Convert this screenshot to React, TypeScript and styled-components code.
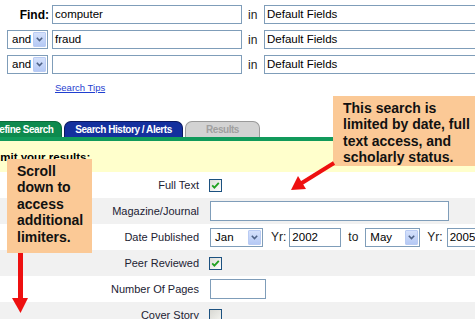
import React from "react";
import styled, { createGlobalStyle, css } from "styled-components";

const Global = createGlobalStyle`
  html, body { margin: 0; padding: 0; background: #fff; }
  body { font-family: "Liberation Sans", Arial, sans-serif; color: #000; }
`;

const Page = styled.div`
  position: relative;
  width: 475px;
  height: 319px;
  overflow: hidden;
  background: #fff;
`;

const SearchGrid = styled.div`
  display: grid;
  grid-template-columns: 52px 190px 22px 240px;
  grid-auto-rows: 19px;
  row-gap: 6px;
  align-items: center;
  padding-top: 5px;
`;

const FindLabel = styled.div`
  font-weight: bold;
  font-size: 12px;
  text-align: right;
  padding-right: 3px;
`;

const TextBox = styled.div<{ $w?: number; $h?: number }>`
  box-sizing: border-box;
  width: ${(p) => (p.$w ? `${p.$w}px` : "100%")};
  height: ${(p) => p.$h ?? 19}px;
  border: 1px solid #7f9db9;
  background: #fff;
  font-size: 11.5px;
  line-height: ${(p) => (p.$h ?? 19) - 2}px;
  padding-left: 2px;
  white-space: nowrap;
  overflow: hidden;
`;

const InWord = styled.div`
  font-size: 12px;
  padding-left: 6px;
  color: #222;
`;

const SelectBox = styled.div<{ $w: number; $ml?: number }>`
  box-sizing: border-box;
  display: flex;
  align-items: stretch;
  justify-content: space-between;
  width: ${(p) => p.$w}px;
  height: 19px;
  margin-left: ${(p) => p.$ml ?? 0}px;
  border: 1px solid #7f9db9;
  background: #fff;
  font-size: 11.5px;
  line-height: 17px;
  padding: 1px;
`;

const SelectText = styled.span`
  padding-left: 3px;
  line-height: 15px;
`;

const DropButton = styled.span`
  box-sizing: border-box;
  width: 13px;
  border: 1px solid #b9cbf3;
  border-radius: 1px;
  background: linear-gradient(#d5e1fb, #b5c9f5);
  display: flex;
  align-items: center;
  justify-content: center;
`;

const Tips = styled.a`
  display: block;
  margin: 8px 0 0 55px;
  font-size: 9.5px;
  line-height: 11px;
  color: #1f3fd0;
  text-decoration: underline;
`;

const TabBar = styled.div`
  display: flex;
  gap: 2px;
  margin: 28px 0 0 -16px;
  height: 16px;
`;

const tabColors = {
  green: css`background: #0d8a4e; color: #fff; border-color: #0a6a3c;`,
  blue: css`background: #14309e; color: #fff; border-color: #0a1860;`,
  gray: css`background: #d3d3d3; color: #a0a0a0; border-color: #9a9a9a;`,
};

const Tab = styled.div<{ $w: number; $tone: keyof typeof tabColors }>`
  box-sizing: border-box;
  width: ${(p) => p.$w}px;
  height: 16px;
  border: 1px solid;
  border-bottom: none;
  border-radius: 7px 7px 0 0;
  font-size: 10px;
  font-weight: bold;
  letter-spacing: -0.45px;
  line-height: 15px;
  text-align: center;
  white-space: nowrap;
  ${(p) => tabColors[p.$tone]}
`;

const GreenRule = styled.div`
  height: 4px;
  background: #119a5b;
`;

const LimitBand = styled.div`
  height: 31px;
  background: #ffffcc;
  box-sizing: border-box;
  padding-top: 10px;
  font-size: 11.5px;
  font-weight: bold;
  line-height: 13px;
  text-indent: -10px;
  white-space: nowrap;
`;

const Row = styled.div<{ $shade: boolean }>`
  display: grid;
  grid-template-columns: 200px 1fr;
  align-items: center;
  height: 26px;
  background: ${(p) => (p.$shade ? "#f1f1f1" : "#fff")};
`;

const RowLabel = styled.div`
  text-align: right;
  padding-right: 1px;
  font-size: 11px;
  color: #222233;
  white-space: nowrap;
`;

const Controls = styled.div`
  display: flex;
  align-items: center;
  padding-left: 9px;
  white-space: nowrap;
`;

const Word = styled.span<{ $ml: number; $mr: number }>`
  font-size: 12px;
  color: #222;
  margin: 0 ${(p) => p.$mr}px 0 ${(p) => p.$ml}px;
`;

const Check = styled.span<{ $on: boolean }>`
  box-sizing: border-box;
  width: 13px;
  height: 13px;
  border: 1px solid #1c5180;
  background: ${(p) =>
    p.$on ? "linear-gradient(135deg,#dcdcd7,#fff)" : "linear-gradient(135deg,#d8d8d3,#f4f4f0)"};
  display: flex;
  align-items: center;
  justify-content: center;
`;

const Callout = styled.div<{ $x: number; $y: number; $w: number; $h: number }>`
  position: absolute;
  left: ${(p) => p.$x}px;
  top: ${(p) => p.$y}px;
  width: ${(p) => p.$w}px;
  height: ${(p) => p.$h}px;
  box-sizing: border-box;
  padding: 4px 0 0 10px;
  background: #fbc996;
  font-size: 14px;
  font-weight: bold;
  line-height: 16.4px;
  color: #111;
`;

const ArrowSvg = styled.svg<{ $x: number; $y: number }>`
  position: absolute;
  left: ${(p) => p.$x}px;
  top: ${(p) => p.$y}px;
  overflow: visible;
`;

const Chevron = () => (
  <svg width="7" height="5" viewBox="0 0 7 5">
    <path d="M0.8 0.8 L3.5 3.5 L6.2 0.8" fill="none" stroke="#4d6185" strokeWidth="1.6" />
  </svg>
);

const Select = ({ w, ml, children }: { w: number; ml?: number; children: React.ReactNode }) => (
  <SelectBox $w={w} $ml={ml}>
    <SelectText>{children}</SelectText>
    <DropButton>
      <Chevron />
    </DropButton>
  </SelectBox>
);

const CheckBox = ({ on }: { on: boolean }) => (
  <Check $on={on}>
    {on && (
      <svg width="9" height="9" viewBox="0 0 9 9">
        <path d="M1.2 4.3 L3.4 6.6 L7.8 1.8" fill="none" stroke="#21a121" strokeWidth="1.8" />
      </svg>
    )}
  </Check>
);

export default function App() {
  return (
    <>
      <Global />
      <Page>
        <SearchGrid>
          <FindLabel>Find:</FindLabel>
          <TextBox>computer</TextBox>
          <InWord>in</InWord>
          <TextBox>Default Fields</TextBox>

          <Select w={41} ml={7}>and</Select>
          <TextBox>fraud</TextBox>
          <InWord>in</InWord>
          <TextBox>Default Fields</TextBox>

          <Select w={41} ml={7}>and</Select>
          <TextBox />
          <InWord>in</InWord>
          <TextBox>Default Fields</TextBox>
        </SearchGrid>

        <Tips href="#">Search Tips</Tips>

        <TabBar>
          <Tab $w={78} $tone="green">Refine Search</Tab>
          <Tab $w={119} $tone="blue">Search History / Alerts</Tab>
          <Tab $w={75} $tone="gray">Results</Tab>
        </TabBar>
        <GreenRule />
        <LimitBand>Limit your results:</LimitBand>

        <Row $shade={false}>
          <RowLabel>Full Text</RowLabel>
          <Controls><CheckBox on /></Controls>
        </Row>
        <Row $shade>
          <RowLabel>Magazine/Journal</RowLabel>
          <Controls><TextBox $w={239} $h={20} style={{ marginLeft: 1 }} /></Controls>
        </Row>
        <Row $shade={false}>
          <RowLabel>Date Published</RowLabel>
          <Controls>
            <Select w={53} ml={1}>Jan</Select>
            <Word $ml={8} $mr={3}>Yr:</Word>
            <TextBox $w={52}>2002</TextBox>
            <Word $ml={7} $mr={7}>to</Word>
            <Select w={55}>May</Select>
            <Word $ml={7} $mr={4}>Yr:</Word>
            <TextBox $w={52}>2005</TextBox>
          </Controls>
        </Row>
        <Row $shade>
          <RowLabel>Peer Reviewed</RowLabel>
          <Controls><CheckBox on /></Controls>
        </Row>
        <Row $shade={false}>
          <RowLabel>Number Of Pages</RowLabel>
          <Controls><TextBox $w={56} $h={20} style={{ marginLeft: 1 }} /></Controls>
        </Row>
        <Row $shade>
          <RowLabel>Cover Story</RowLabel>
          <Controls><CheckBox on={false} /></Controls>
        </Row>

        <Callout $x={333} $y={96} $w={142} $h={70}>
          This search is<br />limited by date, full<br />text access, and<br />scholarly status.
        </Callout>
        <Callout $x={7} $y={159} $w={85} $h={94}>
          Scroll<br />down to<br />access<br />additional<br />limiters.
        </Callout>

        <ArrowSvg $x={285} $y={158} width="52" height="36" viewBox="0 0 52 36">
          <line x1="49" y1="5" x2="16" y2="25.5" stroke="#ee1010" strokeWidth="4" />
          <polygon points="6,32 21,31 13,18" fill="#ee1010" />
        </ArrowSvg>
        <ArrowSvg $x={8} $y={253} width="24" height="62" viewBox="0 0 24 62">
          <rect x="10" y="0" width="5" height="47" fill="#ee1010" />
          <polygon points="4,45 20,45 12.5,60" fill="#ee1010" />
        </ArrowSvg>
      </Page>
    </>
  );
}
